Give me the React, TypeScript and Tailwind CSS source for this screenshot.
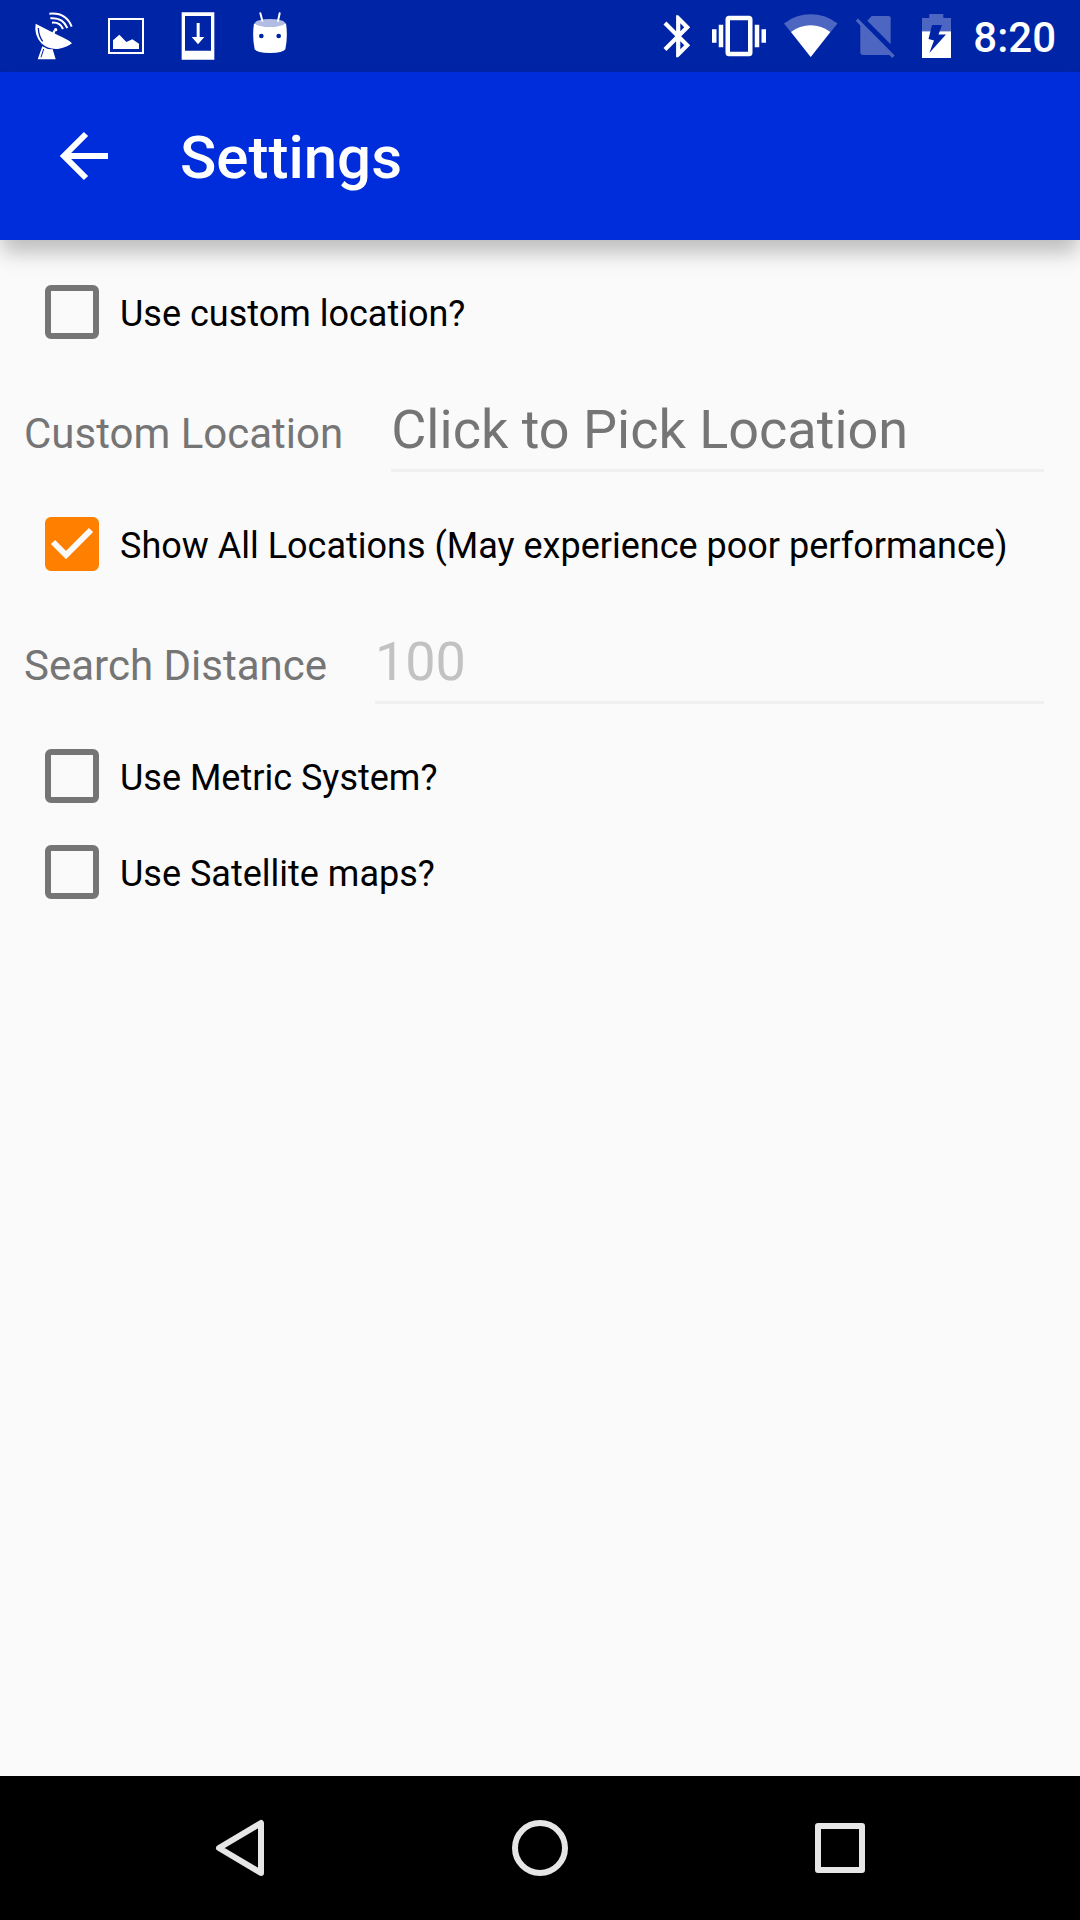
import { useState } from "react";
import type { ReactNode } from "react";

function StatusIcon({ view, className, children }: { view: string; className: string; children: ReactNode }) {
  return (
    <svg viewBox={view} className={`block h-[72px] shrink-0 ${className}`} fill="#fff" aria-hidden="true">
      {children}
    </svg>
  );
}

function StatusBar() {
  return (
    <div className="flex h-[72px] items-center justify-between bg-[#0024a6] pr-6 pl-[18px] text-white">
      <div className="flex">
        <StatusIcon view="54 0 216 216" className="w-[72px]">
          <path d="M107 71Q101 104 124 130Q146 150 177 146Q202 142 216 130Q207 120 173 105L107 71Z" />
          <path d="M115 84Q116 109 128 124" fill="none" stroke="#0024a6" strokeWidth="4" />
          <path d="M127 139Q142 149 158 148L167 178H113Z" />
          <path d="M131 147L123 172" fill="none" stroke="#0024a6" strokeWidth="3" />
          <path d="M159 104L163 92" fill="none" stroke="#fff" strokeWidth="7" />
          <circle cx="167" cy="89" r="5" />
          <g fill="none" stroke="#fff" strokeWidth="6">
            <path d="M148 41Q198 36 215 80" />
            <path d="M151 55Q188 51 202 84" />
            <path d="M156 68Q180 66 189 87" />
          </g>
        </StatusIcon>
        <StatusIcon view="270 0 216 216" className="w-[72px]">
          <rect x="327" y="57" width="102" height="102" fill="none" stroke="#fff" strokeWidth="6" />
          <path d="M339 147V121L358 104L379 126L397 118L417 131V147Z" />
        </StatusIcon>
        <StatusIcon view="486 0 216 216" className="w-[72px]">
          <path fillRule="evenodd" d="M545 37H643V179H545ZM555 48V152H633V48Z" />
          <path d="M590 69H599V111H613L594 133L575 111H590Z" />
        </StatusIcon>
        <StatusIcon view="702 0 216 216" className="w-[72px]">
          <path d="M762 70Q810 90 858 70Q864 110 856 148Q850 159 810 159Q770 159 764 148Q756 110 762 70Z" />
          <ellipse cx="810" cy="69" rx="45" ry="12" fill="#b3bde4" />
          <path d="M781 40L787 62M839 40L834 63" fill="none" stroke="#fff" strokeWidth="6" strokeLinecap="round" />
          <circle cx="784" cy="108" r="7" fill="#0024a6" />
          <circle cx="836" cy="108" r="7" fill="#0024a6" />
        </StatusIcon>
      </div>
      <div className="flex items-center">
        <StatusIcon view="0 0 48 72" className="w-12">
          <path
            transform="translate(0 11) scale(2.1)"
            d="M17.71 7.71L12 2h-1v7.59L6.41 5 5 6.41 10.59 12 5 17.59 6.41 19 11 14.41V22h1l5.71-5.71-4.3-4.29 4.3-4.29zM13 5.83l1.88 1.88L13 9.59V5.83zm1.88 10.46L13 18.17v-3.76l1.88 1.88z"
          />
        </StatusIcon>
        <StatusIcon view="0 0 78 72" className="w-[78px]">
          <path
            transform="translate(11 9) scale(2.25)"
            d="M0 15h2V9H0v6zm3 2h2V7H3v10zm19-8v6h2V9h-2zm-3 8h2V7h-2v10zM16.5 3h-9C6.67 3 6 3.67 6 4.5v15c0 .83.67 1.5 1.5 1.5h9c.83 0 1.5-.67 1.5-1.5v-15c0-.83-.67-1.5-1.5-1.5zM16 19H8V5h8v14z"
          />
        </StatusIcon>
        <StatusIcon view="0 0 66 72" className="w-[66px]">
          <path fillOpacity=".3" d="M31.7 57L5 23.5A43 43 0 0 1 58.5 23.5Z" />
          <path d="M31.7 57L12 32A32 32 0 0 1 51.3 32Z" />
        </StatusIcon>
        <StatusIcon view="0 0 60 72" className="w-[60px]">
          <g fillOpacity=".3">
            <path d="M26.7 16H43.5Q45.7 16 45.7 18.2V44.3L22.3 20.7Z" />
            <path d="M10.7 20.8L15.3 25.5V52Q15.3 55 18.3 55H44.3L47.3 58L49.7 55.5L13 18.6Z" />
          </g>
        </StatusIcon>
        <StatusIcon view="0 0 68 72" className="w-[68px]">
          <path fillOpacity=".3" d="M24.3 14H38.3V18H46V31.3H17V18H24.3Z" />
          <path d="M17 31.3H46V58H17Z" />
          <path d="M27 25H37L33.5 34.5H41L24.3 53L29 40.5L23.5 39Z" fill="#0024a6" />
        </StatusIcon>
        <span className="pt-[3px] text-[42px] leading-[48px] font-medium">8:20</span>
      </div>
    </div>
  );
}

function AppBar() {
  return (
    <header className="z-10 flex h-[168px] items-center bg-[#002ddc] text-white shadow-[0_14px_20px_-2px_rgba(0,0,0,0.25)]">
      <button type="button" aria-label="Back" className="flex h-full w-[168px] items-center justify-center">
        <svg viewBox="0 0 72 72" className="size-[72px]" fill="none" stroke="currentColor" strokeWidth="6" aria-hidden="true">
          <path d="M60 36H16M38 14L16 36L38 58" />
        </svg>
      </button>
      <h1 className="pt-1 pl-3 text-[60px] leading-[72px] font-medium">Settings</h1>
    </header>
  );
}

function CheckRow({ id, label, initial = false }: { id: string; label: string; initial?: boolean }) {
  const [checked, setChecked] = useState(initial);
  return (
    <div className="flex min-h-24 items-center gap-[21px] pl-[45px]">
      <span className="relative flex size-[54px] shrink-0">
        <input
          id={id}
          type="checkbox"
          checked={checked}
          onChange={(e) => setChecked(e.target.checked)}
          className="size-[54px] appearance-none rounded-[6px] border-[6px] border-[#757575] checked:border-[#ff8000] checked:bg-[#ff8000]"
        />
        {checked && (
          <svg viewBox="0 0 54 54" className="pointer-events-none absolute inset-0 size-[54px]" fill="none" stroke="#fafafa" strokeWidth="6" aria-hidden="true">
            <path d="M8 25L21 38L46 13" />
          </svg>
        )}
      </span>
      <label htmlFor={id} className="pt-1 text-[36px] leading-[42px] text-black">
        {label}
      </label>
    </div>
  );
}

function FieldRow({ id, label, children }: { id: string; label: string; children: ReactNode }) {
  return (
    <div className="flex items-baseline gap-12 pt-[37px] pr-9 pb-6 pl-6">
      <label htmlFor={id} className="shrink-0 text-[42px] leading-[48px] text-[#757575]">
        {label}
      </label>
      {children}
    </div>
  );
}

const fieldClass =
  "h-[75px] min-w-0 flex-1 border-b-[3px] border-[#f0f0f0] bg-transparent pb-2 text-[54px] leading-[64px] outline-none";

function NavBar() {
  return (
    <nav className="flex h-36 bg-black px-[90px]">
      <button type="button" aria-label="Back" className="flex flex-1 items-center justify-center">
        <svg viewBox="0 0 72 72" className="size-[72px]" fill="none" stroke="#e6e6e6" strokeWidth="6" strokeLinejoin="round" aria-hidden="true">
          <path d="M57 11V61L15 36Z" />
        </svg>
      </button>
      <button type="button" aria-label="Home" className="flex flex-1 items-center justify-center">
        <svg viewBox="0 0 72 72" className="size-[72px]" fill="none" stroke="#e6e6e6" strokeWidth="6" aria-hidden="true">
          <circle cx="36" cy="36" r="25" />
        </svg>
      </button>
      <button type="button" aria-label="Recent apps" className="flex flex-1 items-center justify-center">
        <svg viewBox="0 0 72 72" className="size-[72px]" fill="none" stroke="#e6e6e6" strokeWidth="6" strokeLinejoin="round" aria-hidden="true">
          <rect x="14" y="14" width="44" height="44" />
        </svg>
      </button>
    </nav>
  );
}

export default function App() {
  return (
    <div className="flex min-h-screen flex-col bg-[#fafafa] font-['Roboto',sans-serif]">
      <StatusBar />
      <AppBar />
      <main className="flex-1 pt-6">
        <CheckRow id="use-custom" label="Use custom location?" />
        <FieldRow id="custom-location" label="Custom Location">
          <input
            id="custom-location"
            type="text"
            readOnly
            value="Click to Pick Location"
            className={`${fieldClass} text-[#757575]`}
          />
        </FieldRow>
        <CheckRow id="show-all" label="Show All Locations (May experience poor performance)" initial />
        <FieldRow id="search-distance" label="Search Distance">
          <input
            id="search-distance"
            type="text"
            disabled
            value="100"
            className={`${fieldClass} text-[#c2c2c2]`}
          />
        </FieldRow>
        <CheckRow id="use-metric" label="Use Metric System?" />
        <CheckRow id="use-satellite" label="Use Satellite maps?" />
      </main>
      <NavBar />
    </div>
  );
}
